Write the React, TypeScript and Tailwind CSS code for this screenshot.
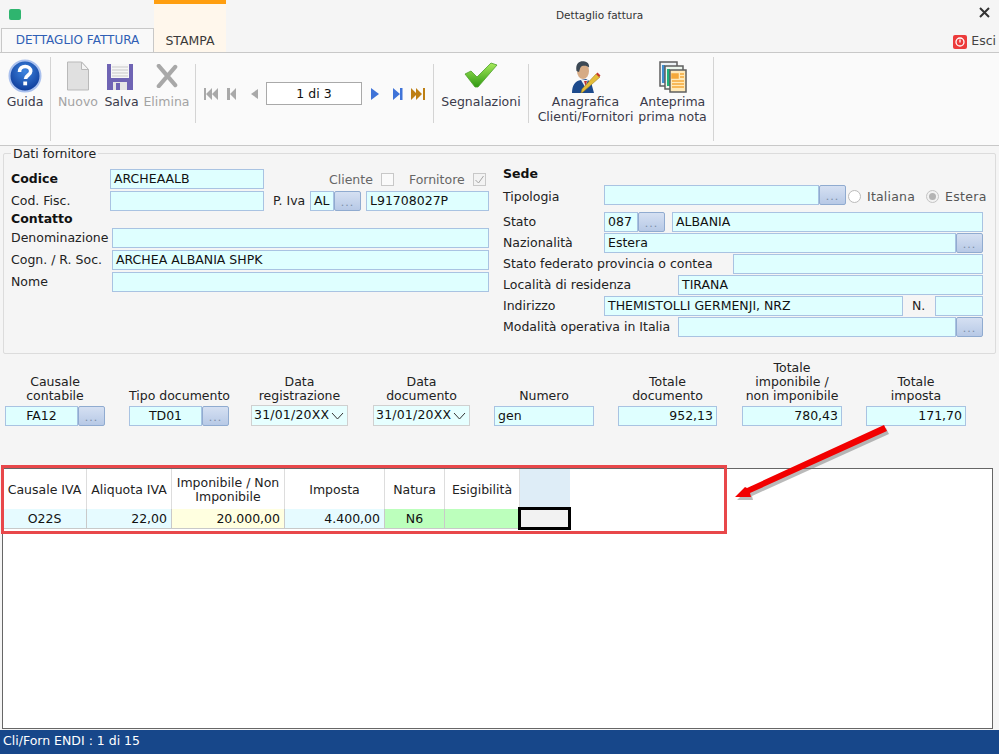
import type { ReactNode } from "react";

const fieldCls = "h-[20px] border border-[#a9c3e2] bg-[#dfffff] px-[3px] text-[12.5px] leading-[17px] text-[#111] whitespace-nowrap overflow-hidden";

function Field({ w, children, right, center }: { w: string; children?: ReactNode; right?: boolean; center?: boolean }) {
  return <div className={`${fieldCls} ${w} ${right ? "text-right" : ""} ${center ? "text-center" : ""}`}>{children}</div>;
}

function Dots() {
  return (
    <div className="flex h-[20px] w-[27px] shrink-0 items-end justify-center rounded-[2px] border border-[#90abd0] bg-gradient-to-b from-[#d5e0f2] to-[#b7c9e6] pb-[2px] text-[11px] leading-[11px] tracking-[1px] text-[#7d8ea8]">
      ...
    </div>
  );
}

function Label({ w, children, bold }: { w: string; children: ReactNode; bold?: boolean }) {
  return <div className={`${w} shrink-0 whitespace-nowrap text-[12.5px] leading-[20px] ${bold ? "font-bold text-[#111]" : "text-[#222]"}`}>{children}</div>;
}

function ToolButton({ icon, label, w, muted }: { icon: ReactNode; label: ReactNode; w: string; muted?: boolean }) {
  return (
    <div className={`flex ${w} shrink-0 flex-col items-center`}>
      <div className="flex h-[36px] items-end justify-center">{icon}</div>
      <div className={`mt-[1px] whitespace-nowrap text-center text-[12.5px] leading-[15px] ${muted ? "text-[#a3a3a3]" : "text-[#3b3b4a]"}`}>{label}</div>
    </div>
  );
}

function Sep({ tall }: { tall?: boolean }) {
  return <div className={`w-px shrink-0 bg-[#d4d4d4] ${tall ? "h-[84px]" : "mt-[7px] h-[59px]"}`} />;
}

function HelpIcon() {
  return (
    <svg width="34" height="34" viewBox="0 0 34 34">
      <defs>
        <radialGradient id="help" cx="50%" cy="35%" r="65%">
          <stop offset="0%" stopColor="#3f86e0" />
          <stop offset="100%" stopColor="#0d3a98" />
        </radialGradient>
      </defs>
      <circle cx="17" cy="17" r="15.5" fill="url(#help)" stroke="#a9c0ee" strokeWidth="2" />
      <path d="M11.5 13c0-3.5 2.6-5.5 5.7-5.5 3.2 0 5.5 1.900 5.500 4.700 0 4-5.200 4-5.200 7.800" fill="none" stroke="#fff" strokeWidth="3.600" />
      <rect x="15.300" y="22.500" width="3.800" height="3.800" fill="#fff" />
    </svg>
  );
}

function NewIcon() {
  return (
    <svg width="24" height="30" viewBox="0 0 24 30" className="mb-[2px]">
      <path d="M1.500 1h14l7 7.500V29h-21z" fill="#e0e0e0" stroke="#b9b9b9" />
      <path d="M15.500 1v7.500h7z" fill="#f4f4f4" stroke="#b9b9b9" />
    </svg>
  );
}

function SaveIcon() {
  return (
    <svg width="28" height="28" viewBox="0 0 28 28" className="mr-[3px] mb-[2px]">
      <path d="M1 1h26v26H1z" fill="#6f64b4" />
      <rect x="5" y="1" width="18" height="14" fill="#f6f6f6" />
      <path d="M6 4h16M6 7h16M6 10h16M6 13h16" stroke="#c9c9c9" />
      <rect x="7" y="19" width="14" height="8" fill="#e6e6e6" />
      <rect x="10" y="20" width="4" height="7" fill="#6f64b4" />
    </svg>
  );
}

function DeleteIcon() {
  return (
    <svg width="22" height="24" viewBox="0 0 24 26" className="mb-[5px]">
      <path d="M3 2l18 21M21 3L3 24" stroke="#a8a8a8" strokeWidth="4.500" strokeLinecap="round" />
    </svg>
  );
}

function CheckIcon() {
  return (
    <svg width="34" height="26" viewBox="0 0 34 26" className="mb-[5px]">
      <defs>
        <linearGradient id="chk" x1="0" y1="0" x2="0" y2="1">
          <stop offset="0%" stopColor="#a8ea5c" />
          <stop offset="100%" stopColor="#2f9a12" />
        </linearGradient>
      </defs>
      <path d="M1 12l6-3 6 6L27 1l6 2-19 22h-3z" fill="url(#chk)" stroke="#4c9f2a" strokeWidth="0.800" />
    </svg>
  );
}

function PersonIcon() {
  return (
    <svg width="30" height="32" viewBox="0 0 30 32">
      <path d="M1 32c0-8 3-12 9-13l5-1 5 3 3 11z" fill="#1d4a8c" />
      <path d="M10 19l4 7 3-7z" fill="#eee" />
      <path d="M13 20l1.500 5 1.500-5z" fill="#c23030" />
      <ellipse cx="12" cy="10" rx="6" ry="8" fill="#d6ab85" />
      <path d="M5.500 10C4 2 9-1 14 .5c3 .8 4.500 3 4 6-1.500-2-5-2-7-1.500-2 1-2 3-3 6z" fill="#3c4854" />
      <path d="M12 31l-2 1 1-4 14-15 4 3z" fill="#e5bd3a" stroke="#a5861f" strokeWidth="0.600" />
      <path d="M25 13l1.500-1.500 3 3L28 16z" fill="#c8382c" />
    </svg>
  );
}

function DocsIcon() {
  return (
    <svg width="28" height="32" viewBox="0 0 28 32">
      <rect x="1" y="1" width="17" height="24" fill="#eef3f6" stroke="#5f5f5f" strokeWidth="1.500" />
      <rect x="3" y="4" width="3" height="18" fill="#3f8fd0" />
      <rect x="6" y="5" width="18" height="23" fill="#eef7ee" stroke="#5f5f5f" strokeWidth="1.500" />
      <rect x="8" y="8" width="3" height="17" fill="#1fb37c" />
      <rect x="11" y="9" width="16" height="22" fill="#ffe9b8" stroke="#5f5f5f" strokeWidth="1.500" />
      <path d="M13 13h6v4h-6zM21 13h4M21 16h4M13 20h12M13 23h12M13 26h12" fill="#f5a83a" stroke="#f5a83a" strokeWidth="1.500" />
    </svg>
  );
}

function Nav({ d, c, w }: { d: string; c: string; w: number }) {
  return (
    <svg width={w} height="14" viewBox={`0 0 ${w} 14`} className="shrink-0">
      <path d={d} fill={c} />
    </svg>
  );
}

function DocColumn({ label, ml, w, children }: { label: ReactNode; ml: string; w: string; children: ReactNode }) {
  return (
    <div className={`flex ${w} ${ml} shrink-0 flex-col items-stretch`}>
      <div className="mb-[3px] text-center text-[12.5px] leading-[14px] whitespace-nowrap text-[#222]">{label}</div>
      {children}
    </div>
  );
}

function DateSelect() {
  return (
    <div className="-mt-[1px] flex h-[21px] items-center border border-[#d0d0d0] bg-[#e6ffff] pl-[2px] text-[12.5px] tracking-[0.2px] text-[#111] whitespace-nowrap">
      <span className="flex-1 overflow-hidden">31/01/20XX</span>
      <svg width="13" height="8" viewBox="0 0 13 8" className="mr-[3px] shrink-0">
        <path d="M1 1l5.500 6L12 1" fill="none" stroke="#333" />
      </svg>
    </div>
  );
}

function HeadCell({ w, children, bg }: { w: string; children?: ReactNode; bg?: string }) {
  return (
    <div className={`flex h-[40px] ${w} shrink-0 items-center justify-center border-r border-[#dddddd] pt-[1px] text-center text-[12.5px] leading-[14px] text-[#222] ${bg ?? "bg-white"}`}>
      {children}
    </div>
  );
}

function DataCell({ w, children, bg, right }: { w: string; children?: ReactNode; bg: string; right?: boolean }) {
  return (
    <div className={`h-[20px] ${w} shrink-0 border-r border-b border-[#c9c9c9] px-[4px] text-[12.5px] leading-[19px] text-[#111] ${bg} ${right ? "text-right" : "text-center"}`}>
      {children}
    </div>
  );
}

export default function App() {
  return (
    <div className="relative flex h-[754px] w-[999px] flex-col overflow-hidden bg-[#f5f5f5] font-['DejaVu_Sans',sans-serif]">
      {/* title + tabs */}
      <div className="flex h-[53px] shrink-0 border-b border-[#c8c8c8]">
        <div className="flex w-[154px] shrink-0 flex-col">
          <div className="h-[28px] pt-[9px] pl-[9px]">
            <div className="h-[11px] w-[12px] rounded-[2px] bg-[#2fb56f]" />
          </div>
          <div className="ml-[1px] h-[25px] border border-b-0 border-[#c8c8c8] bg-[#f9f9f9] text-center text-[12px] leading-[23px] text-[#2f5fb5]">DETTAGLIO FATTURA</div>
        </div>
        <div className="flex w-[72px] shrink-0 flex-col justify-end border-t-4 border-[#ff9e0f] bg-[#fff7ec] pb-[2px] text-center text-[12.5px] leading-[18px] text-[#3a3a3a]">STAMPA</div>
        <div className="flex flex-1 flex-col">
          <div className="flex h-[28px] items-center">
            <div className="ml-[330px] pt-[3px] text-[10.5px] text-[#333]">Dettaglio fattura</div>
            <svg width="11" height="11" viewBox="0 0 11 11" className="mr-[9px] ml-auto -mt-[3px]">
              <path d="M1 1l9 9M10 1l-9 9" stroke="#333" strokeWidth="2" />
            </svg>
          </div>
          <div className="flex h-[24px] items-center justify-end gap-[4px] pt-[3px] pr-[3px] text-[12.5px] text-[#444]">
            <svg width="14" height="14" viewBox="0 0 14 14">
              <rect width="14" height="14" rx="2" fill="#ec3b3b" />
              <circle cx="7" cy="7" r="4" fill="none" stroke="#fff" strokeWidth="1.300" />
              <path d="M7 4.500v3" stroke="#fff" strokeWidth="1.300" />
            </svg>
            Esci
          </div>
        </div>
      </div>

      {/* toolbar */}
      <div className="flex h-[93px] shrink-0 items-start border-b border-[#c8c8c8] bg-[#fafafa] pt-[4px]">
        <ToolButton w="w-[50px]" icon={<HelpIcon />} label="Guida" />
        <Sep tall />
        <ToolButton w="w-[54px]" icon={<NewIcon />} label="Nuovo" muted />
        <ToolButton w="w-[33px]" icon={<SaveIcon />} label="Salva" />
        <ToolButton w="w-[57px]" icon={<DeleteIcon />} label="Elimina" muted />
        <Sep />
        <div className="mt-[25px] flex w-[237px] shrink-0 items-center">
          <div className="ml-[8px] flex items-center">
            <Nav w={16} d="M0 1h2v12H0zM8 1v12L2 7zM14 1v12L8 7z" c="#a9a9a9" />
            <Nav w={20} d="M7 1h3v12H7zM16 1v12L10 7z" c="#a9a9a9" />
            <Nav w={20} d="M18 2v10l-7-5z" c="#a9a9a9" />
          </div>
          <div className="ml-[6px] h-[23px] w-[96px] border border-[#a9a9a9] bg-white text-center text-[12.5px] leading-[21px] text-[#111]">1 di 3</div>
          <Nav w={20} d="M9 1l8 6-8 6z" c="#3f73d8" />
          <Nav w={22} d="M11 1l7 6-7 6zM18 1h2.500v12H18z" c="#3f73d8" />
          <Nav w={22} d="M7 1l6 6-6 6zM12 1l6 6-6 6zM19 1h2v12h-2z" c="#bd7f14" />
        </div>
        <Sep />
        <ToolButton w="w-[94px]" icon={<CheckIcon />} label="Segnalazioni" />
        <Sep />
        <ToolButton w="w-[113px]" icon={<PersonIcon />} label={<>Anagrafica<br />Clienti/Fornitori</>} />
        <ToolButton w="w-[61px] mr-[10px]" icon={<DocsIcon />} label={<>Anteprima<br />prima nota</>} />
        <Sep tall />
      </div>

      {/* dati fornitore */}
      <fieldset className="mx-[3px] flex h-[208px] shrink-0 rounded-[2px] border border-[#dcdcdc]">
        <legend className="ml-[7px] h-[15px] px-[2px] text-[12.5px] leading-[15px] text-[#222]">Dati fornitore</legend>
        <div className="ml-[7px] flex w-[479px] shrink-0 flex-col pt-[8px]">
          <div className="flex h-[20px]">
            <Label w="w-[99px]" bold>Codice</Label>
            <Field w="w-[154px]">ARCHEAALB</Field>
            <div className="ml-[65px] text-[12.5px] leading-[22px] text-[#666]">Cliente</div>
            <div className="mt-[4px] ml-[8px] h-[13px] w-[13px] border border-[#c8c8c8] bg-[#fafafa]" />
            <div className="ml-[15px] text-[12.5px] leading-[22px] text-[#666]">Fornitore</div>
            <div className="mt-[4px] ml-[8px] flex h-[13px] w-[13px] items-center justify-center border border-[#c8c8c8] bg-[#f3f3f3]">
              <svg width="11" height="11" viewBox="0 0 11 11"><path d="M1.500 6l3 3 5-7" fill="none" stroke="#a5a5a5" /></svg>
            </div>
          </div>
          <div className="mt-[2px] flex">
            <Label w="w-[99px]">Cod. Fisc.</Label>
            <Field w="w-[154px]" />
            <div className="ml-[9px] w-[37px] text-[12.5px] leading-[20px] text-[#222]">P. Iva</div>
            <Field w="w-[24px]">AL</Field>
            <Dots />
            <Field w="ml-[5px] w-[123px]">L91708027P</Field>
          </div>
          <div className="h-[15px] mt-0 text-[12.5px] font-bold leading-[15px] text-[#111]">Contatto</div>
          <div className="mt-[2px] flex">
            <Label w="w-[101px]">Denominazione</Label>
            <Field w="w-[377px]" />
          </div>
          <div className="mt-[2px] flex">
            <Label w="w-[101px]">Cogn. / R. Soc.</Label>
            <Field w="w-[377px]">ARCHEA ALBANIA SHPK</Field>
          </div>
          <div className="mt-[2px] flex">
            <Label w="w-[101px]">Nome</Label>
            <Field w="w-[377px]" />
          </div>
        </div>

        <div className="ml-[13px] flex w-[484px] shrink-0 flex-col">
          <div className="h-[24px] pt-[5px] text-[12.5px] font-bold leading-[16px] text-[#111]">Sede</div>
          <div className="flex h-[20px]">
            <Label w="w-[101px] pt-[2px]">Tipologia</Label>
            <Field w="w-[215px]" />
            <Dots />
            <div className="mt-[5px] ml-[2px] h-[13px] w-[13px] rounded-full border border-[#bbbbbb] bg-white" />
            <div className="ml-[6px] text-[12.5px] tracking-[0.2px] leading-[23px] text-[#555]">Italiana</div>
            <div className="mt-[5px] ml-[11px] flex h-[13px] w-[13px] items-center justify-center rounded-full border border-[#c4c4c4] bg-[#f2f2f2]">
              <div className="h-[7px] w-[7px] rounded-full bg-[#b4b4b4]" />
            </div>
            <div className="ml-[6px] text-[12.5px] tracking-[0.3px] leading-[23px] text-[#555]">Estera</div>
          </div>
          <div className="mt-[7px] flex">
            <Label w="w-[101px]">Stato</Label>
            <Field w="w-[34px]">087</Field>
            <Dots />
            <Field w="ml-[7px] w-[311px]">ALBANIA</Field>
          </div>
          <div className="mt-[1px] flex">
            <Label w="w-[101px]">Nazionalità</Label>
            <Field w="w-[352px]">Estera</Field>
            <Dots />
          </div>
          <div className="mt-[1px] flex">
            <Label w="w-[230px]">Stato federato provincia o contea</Label>
            <Field w="w-[250px]" />
          </div>
          <div className="mt-[1px] flex">
            <Label w="w-[175px]">Località di residenza</Label>
            <Field w="w-[305px]">TIRANA</Field>
          </div>
          <div className="mt-[1px] flex">
            <Label w="w-[101px]">Indirizzo</Label>
            <Field w="w-[299px]">THEMISTOLLI GERMENJI, NRZ</Field>
            <div className="ml-[9px] w-[23px] text-[12.5px] leading-[20px] text-[#222]">N.</div>
            <Field w="w-[48px]" />
          </div>
          <div className="mt-[1px] flex">
            <Label w="w-[175px]">Modalità operativa in Italia</Label>
            <Field w="w-[278px]" />
            <Dots />
          </div>
        </div>
      </fieldset>

      {/* dati documento */}
      <div className="flex h-[72px] shrink-0 items-end">
        <DocColumn ml="ml-[5px]" w="w-[100px]" label={<>Causale<br />contabile</>}>
          <div className="flex"><Field w="w-[73px]" center>FA12</Field><Dots /></div>
        </DocColumn>
        <DocColumn ml="ml-[24px]" w="w-[100px]" label="Tipo documento">
          <div className="flex"><Field w="w-[73px]" center>TD01</Field><Dots /></div>
        </DocColumn>
        <DocColumn ml="ml-[22px]" w="w-[97px]" label={<>Data<br />registrazione</>}>
          <DateSelect />
        </DocColumn>
        <DocColumn ml="ml-[25px]" w="w-[97px]" label={<>Data<br />documento</>}>
          <DateSelect />
        </DocColumn>
        <DocColumn ml="ml-[24px]" w="w-[100px]" label="Numero">
          <Field w="w-[100px]">gen</Field>
        </DocColumn>
        <DocColumn ml="ml-[24px]" w="w-[99px]" label={<>Totale<br />documento</>}>
          <Field w="w-[99px]" right>952,13</Field>
        </DocColumn>
        <DocColumn ml="ml-[25px]" w="w-[100px]" label={<>Totale<br />imponibile /<br />non imponibile</>}>
          <Field w="w-[100px]" right>780,43</Field>
        </DocColumn>
        <DocColumn ml="ml-[24px]" w="w-[100px]" label={<>Totale<br />imposta</>}>
          <Field w="w-[100px]" right>171,70</Field>
        </DocColumn>
      </div>

      {/* griglia */}
      <div className="mt-[42px] mr-[6px] mb-[1px] ml-[2px] min-h-0 flex-1 border border-[#666666] bg-white">
        <div className="flex">
          <HeadCell w="w-[84px]">Causale IVA</HeadCell>
          <HeadCell w="w-[85px]">Aliquota IVA</HeadCell>
          <HeadCell w="w-[113px]">Imponibile / Non<br />Imponibile</HeadCell>
          <HeadCell w="w-[100px]">Imposta</HeadCell>
          <HeadCell w="w-[60px]">Natura</HeadCell>
          <HeadCell w="w-[75px]">Esigibilità</HeadCell>
          <HeadCell w="w-[50px] border-r-0" bg="bg-[#deedf7]" />
        </div>
        <div className="flex">
          <DataCell w="w-[84px]" bg="bg-[#e6fbff]">O22S</DataCell>
          <DataCell w="w-[85px]" bg="bg-[#e6fbff]" right>22,00</DataCell>
          <DataCell w="w-[113px]" bg="bg-[#ffffe0]" right>20.000,00</DataCell>
          <DataCell w="w-[100px]" bg="bg-[#e6fbff]" right>4.400,00</DataCell>
          <DataCell w="w-[60px]" bg="bg-[#bcffbc]">N6</DataCell>
          <DataCell w="w-[75px]" bg="bg-[#bcffbc]" />
          <div className="-mt-[2px] -ml-[2px] h-[23px] w-[53px] shrink-0 border-3 border-black bg-[#f2f2f2]" />
        </div>
      </div>

      {/* status */}
      <div className="h-[24px] shrink-0 bg-[#17478a] pl-[3px] text-[12.5px] leading-[22px] text-white">Cli/Forn ENDI : 1 di 15</div>

      {/* annotazione */}
      <div className="pointer-events-none absolute top-[465px] left-[1px] h-[69px] w-[726px] border-3 border-[#e8474a]" />
      <svg width="170" height="90" viewBox="0 0 170 90" className="pointer-events-none absolute top-[420px] left-[728px]">
        <path d="M156 5l3 6L22 73l1 4H7l10-10 2 1z" fill="#666" opacity="0.450" transform="translate(2 3)" />
        <path d="M156 5l3 6L22 73l1 4H7l10-10 2 1z" fill="#f20000" />
      </svg>
    </div>
  );
}
